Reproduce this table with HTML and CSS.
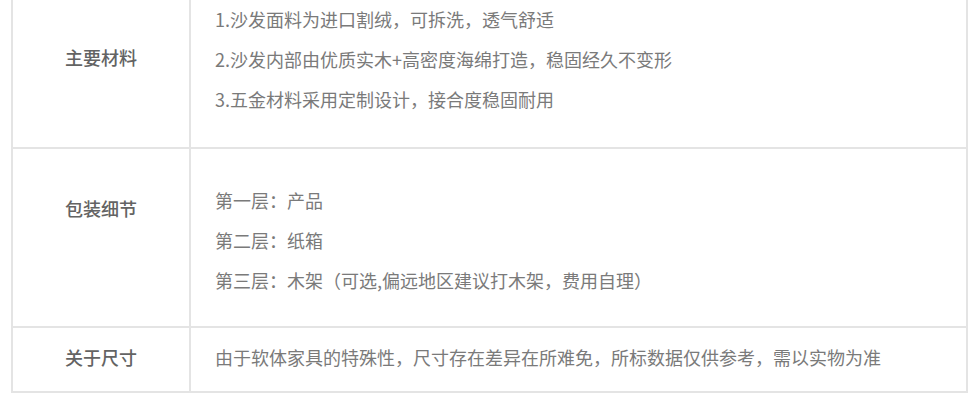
FILE: index.html
```html
<!DOCTYPE html>
<html lang="zh-CN">
<head>
<meta charset="utf-8">
<title>商品参数</title>
<link rel="stylesheet" href="styles.css">
</head>
<body>
<div class="spec">
  <div class="row row-material">
    <div class="label">主要材料</div>
    <div class="content">
      <p>1.沙发面料为进口割绒，可拆洗，透气舒适</p>
      <p>2.沙发内部由优质实木+高密度海绵打造，稳固经久不变形</p>
      <p>3.五金材料采用定制设计，接合度稳固耐用</p>
    </div>
  </div>
  <div class="row row-pack">
    <div class="label">包装细节</div>
    <div class="content">
      <p>第一层：产品</p>
      <p>第二层：纸箱</p>
      <p>第三层：木架（可选,偏远地区建议打木架，费用自理）</p>
    </div>
  </div>
  <div class="row row-size">
    <div class="label">关于尺寸</div>
    <div class="content">
      <p>由于软体家具的特殊性，尺寸存在差异在所难免，所标数据仅供参考，需以实物为准</p>
    </div>
  </div>
</div>
</body>
</html>
```

FILE: styles.css
```css
html, body {
  margin: 0;
  padding: 0;
  background: #ffffff;
}

body {
  font-family: "Noto Sans CJK SC", "Noto Sans", sans-serif;
  font-size: 18px;
  color: #7a7a7a;
}

.spec {
  margin-left: 11px;
  width: 957px;
  box-sizing: border-box;
  border-left: 2px solid #e4e4e4;
  border-right: 2px solid #e4e4e4;
}

.row {
  display: grid;
  grid-template-columns: 176px 1fr;
  border-bottom: 2px solid #e4e4e4;
  align-items: start;
}

.label {
  text-align: center;
  line-height: 40px;
  font-weight: 500;
  color: #636363;
}

.content {
  border-left: 2px solid #e4e4e4;
  padding-left: 24px;
  align-self: stretch;
}

.content p {
  margin: 0;
  line-height: 40px;
}

.row-material .label { padding-top: 37px; }
.row-material .content { padding-top: 0; padding-bottom: 28px; margin-top: -1px; }

.row-pack .label { padding-top: 39px; }
.row-pack .content { padding-top: 31px; padding-bottom: 26px; }

.row-size .label { padding-top: 9px; }
.row-size .content { padding-top: 9px; padding-bottom: 14px; }
```
